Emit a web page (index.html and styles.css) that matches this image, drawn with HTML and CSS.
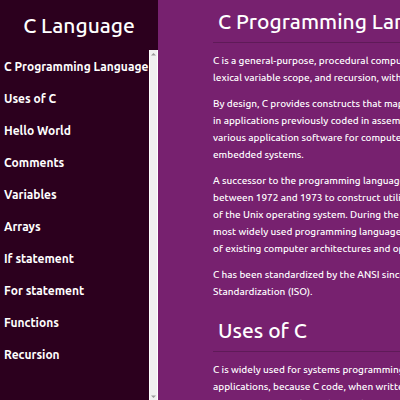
FILE: index.html
```html
<!DOCTYPE html>
<html lang="en">
<head>
<meta charset="utf-8">
<meta name="viewport" content="width=device-width, initial-scale=1">
<title>C Language</title>
<link rel="stylesheet" href="styles.css">
</head>
<body>
<nav class="sidebar">
  <h1 class="brand">C Language</h1>
  <div class="menu">
    <ul class="links">
      <li><a href="#intro">C Programming Language</a></li>
      <li><a href="#uses">Uses of C</a></li>
      <li><a href="#hello">Hello World</a></li>
      <li><a href="#comments">Comments</a></li>
      <li><a href="#variables">Variables</a></li>
      <li><a href="#arrays">Arrays</a></li>
      <li><a href="#if">If statement</a></li>
      <li><a href="#for">For statement</a></li>
      <li><a href="#functions">Functions</a></li>
      <li><a href="#recursion">Recursion</a></li>
    </ul>
    <div class="track" aria-hidden="true">
      <svg class="arrow" viewBox="0 0 5 3"><path d="M0 2.5 2.5 0 5 2.5z"/></svg>
      <svg class="arrow" viewBox="0 0 5 3"><path d="M0 .5 2.5 3 5 .5z"/></svg>
    </div>
  </div>
</nav>
<main class="content">
  <section id="intro">
    <h2>C Programming Language</h2>
    <p>C is a general-purpose, procedural computer<br>lexical variable scope, and recursion, with a</p>
    <p>By design, C provides constructs that map<br>in applications previously coded in assembly<br>various application software for computers<br>embedded systems.</p>
    <p>A successor to the programming language B,<br>between 1972 and 1973 to construct utilities<br>of the Unix operating system. During the 1980s<br>most widely used programming languages,<br>of existing computer architectures and operating</p>
    <p>C has been standardized by the ANSI since 1989<br>Standardization (ISO).</p>
  </section>
  <section id="uses">
    <h2>Uses of C</h2>
    <p>C is widely used for systems programming in<br>applications, because C code, when written for<br>system-specific code can be used to access</p>
  </section>
</main>
</body>
</html>
```
FILE: styles.css
```css
* { box-sizing: border-box; }

body {
  display: grid;
  grid-template-columns: max-content 1fr;
  height: 100vh;
  margin: 0;
  overflow: hidden;
  background: #77216f;
  color: #fff;
  font: 500 10px/17px Ubuntu, "Noto Sans", sans-serif;
}

.sidebar {
  display: flex;
  flex-direction: column;
  width: 158px;
  height: 100vh;
  background: #2c001e;
}

.brand {
  margin: 0;
  height: 50px;
  font-size: 21px;
  font-weight: 500;
  line-height: 50px;
  text-align: center;
}

.menu {
  display: flex;
  flex: 1;
  min-height: 0;
}

.links {
  flex: 1;
  min-width: 0;
  margin: 0;
  padding: 1px 0 0;
  list-style: none;
}

.links a {
  display: block;
  padding-left: 4px;
  color: #fff;
  font-size: 12px;
  font-weight: 600;
  line-height: 32px;
  text-decoration: none;
  white-space: nowrap;
}

.track {
  display: flex;
  flex-direction: column;
  justify-content: space-between;
  align-items: center;
  width: 9px;
  padding: 3px 0 2px;
  border: solid #fff;
  border-width: 0 1px;
  background: #f0f0f0;
}

.arrow {
  width: 5px;
  height: 3px;
  fill: #999;
}

.content {
  min-width: 0;
  padding-left: 55px;
  overflow: hidden;
  white-space: nowrap;
}

h2 {
  margin: 0 0 9px;
  padding: 0 5px;
  height: 43px;
  border-bottom: 1px solid #5f1a58;
  font-size: 21px;
  font-weight: 500;
  line-height: 42px;
}

p { margin: 0 0 9px; }
```
